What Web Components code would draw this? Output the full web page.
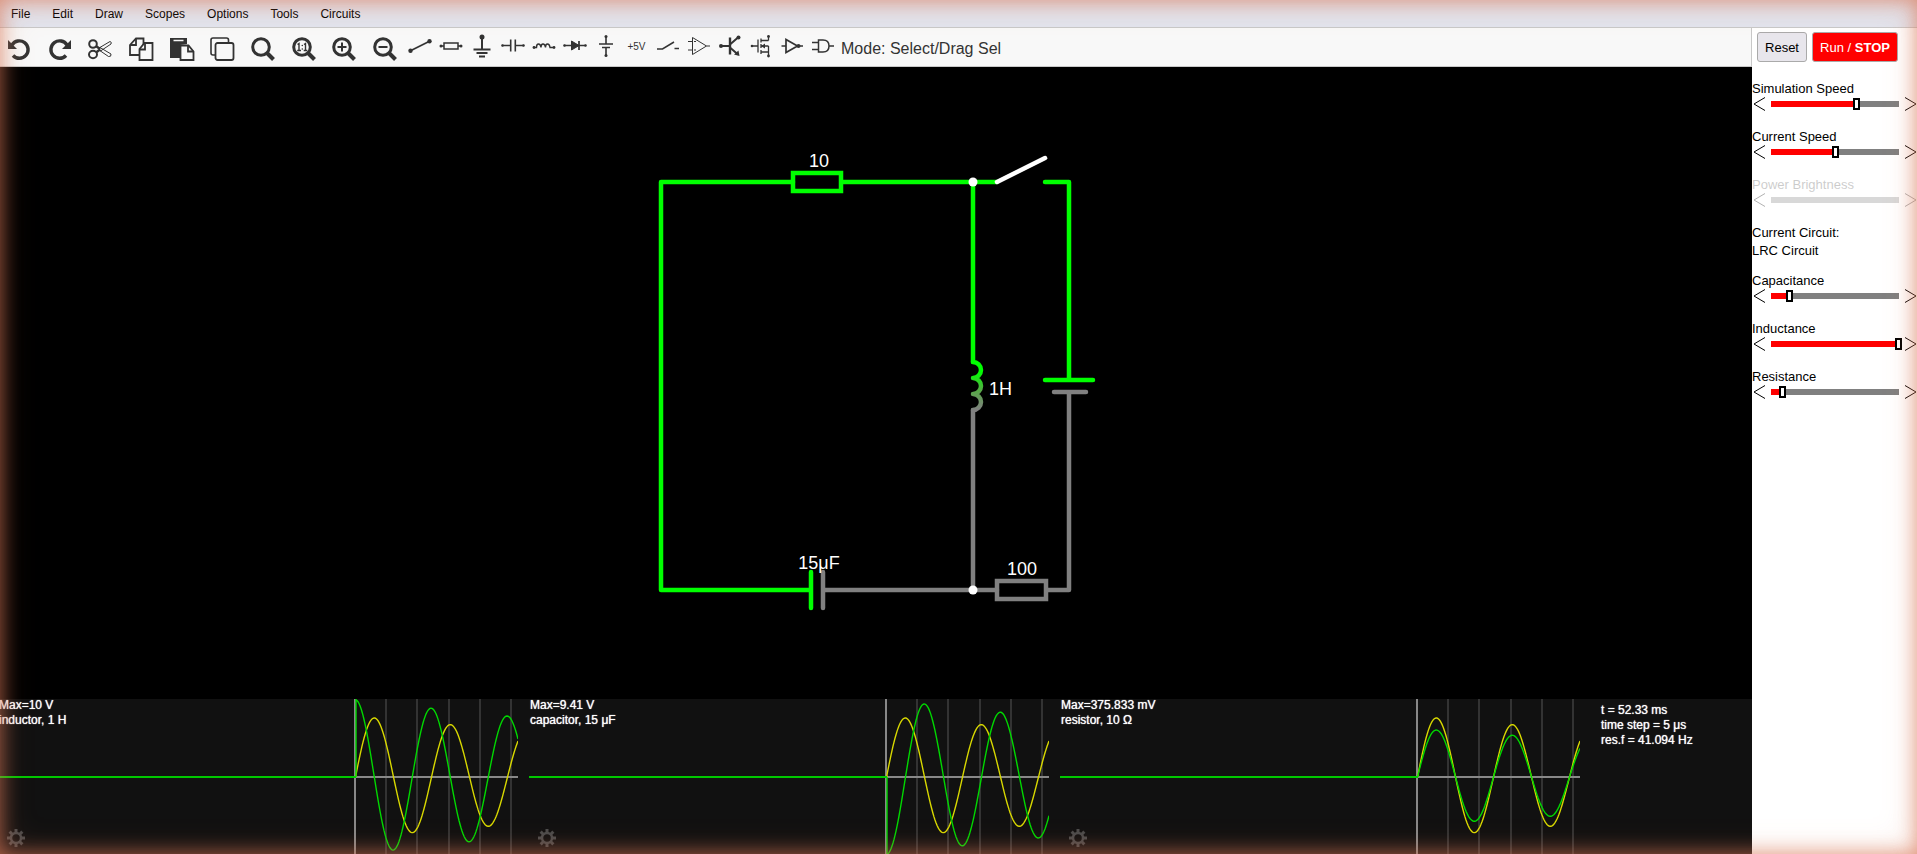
<!DOCTYPE html>
<html lang="en">
<head>
<meta charset="utf-8">
<title>Circuit Simulator</title>
<style>
html,body{margin:0;height:100%}
body{font-family:"Liberation Sans",Arial,sans-serif;background:#fff;color:#000}
</style>
</head>
<body>
<circuit-app></circuit-app>
<script>
const define = (name, css, html, setup) => customElements.define(name, class extends HTMLElement {
  constructor() {
    super();
    const t = document.createElement('template');
    t.innerHTML = `<style>*{box-sizing:border-box}button{font:inherit;color:inherit;border:0;background:none;padding:0;margin:0}svg{display:block}${css}</style>${typeof html === 'function' ? '' : html}`;
    this.attachShadow({mode: 'open'}).append(t.content.cloneNode(true));
  }
  connectedCallback() {
    if (this.ready) return;
    this.ready = true;
    if (typeof html === 'function') this.shadowRoot.innerHTML += html(this);
    if (setup) setup(this);
  }
});

/* Menu bar */
define('menu-bar', `
:host{display:block;background:#e2e4ed;border-bottom:1px solid #c8c8c8}
nav{display:flex;gap:22px;padding:0 11px;height:27px;align-items:center;font-size:12px;line-height:16px;text-shadow:0 0 1px #000,0 0 1px #000}`,
`<nav>${['File','Edit','Draw','Scopes','Options','Tools','Circuits'].map(x => `<button>${x}</button>`).join('')}</nav>`);

/* Tool bar icons, 24x24 */
const lens = '<circle cx="10" cy="10" r="8.3" fill="none" stroke-width="3"/><path d="M16 16l6.5 6.5" stroke-width="4"/>';
const dot = (x, y, r = 1.7) => `<circle cx="${x}" cy="${y}" r="${r}" fill="#333" stroke="none"/>`;
const big = {
  Undo: '<path d="M5 8A8.7 8.7 0 1 1 6 18.5" fill="none" stroke-width="3.4"/><path d="M1 3v9h9z" fill="#333" stroke="none"/>',
  Redo: '<path d="M19 8A8.7 8.7 0 1 0 18 18.5" fill="none" stroke-width="3.4"/><path d="M23 3v9h-9z" fill="#333" stroke="none"/>',
  Cut: '<g fill="none"><circle cx="5" cy="7" r="3.8" stroke-width="2"/><ellipse cx="5" cy="17.5" rx="4" ry="3.7" stroke-width="2"/><path d="M8 9l4 3M8 15.500l4-3" stroke-width="2.400"/><path d="M11 11L22 4.500q2 .5 1 2.500L12.500 14zM12 10.500L23 17q.5 3-2.500 2.500L11 13z"/></g>',
  Copy: '<g fill="#f8f8f8" stroke-width="1.800"><path d="M7 1.500h7.500V18H1V8z"/><path d="M7 1.500V8H1" fill="none"/><path d="M15.500 6H23.500v17h-13V12z"/><path d="M16 6v6.500h-5.500" fill="none"/></g>',
  Paste: '<path d="M0 1h17v6l-7 1v13H0z" fill="#333" stroke="none"/><path d="M3.500 3.500h10" stroke="#f8f8f8" stroke-width="1.500"/><g fill="#f8f8f8" stroke-width="1.800"><path d="M10.500 8.500h8l5 6V23h-13z"/><path d="M18 8.500v6h5.500" fill="none"/></g>',
  Duplicate: '<rect x="1" y="1" width="17.500" height="17" rx="2" fill="#f8f8f8" stroke-width="1.600"/><rect x="5.500" y="6" width="18" height="17" rx="2" fill="#f8f8f8" stroke-width="1.800"/>',
  Find: lens,
  'Zoom 1:1': lens + '<path d="M5.500 7.500L7 6.500v7M5.200 13.500H9M12 7.500l1.500-1v7M11.700 13.500h3.600" fill="none" stroke-width="1.400"/>' + dot(10.300,8.500,.8) + dot(10.300,12,.8),
  'Zoom in': lens + '<path d="M10 5.500v9M5.500 10h9" stroke-width="2"/>',
  'Zoom out': lens + '<path d="M5.500 10h9" stroke-width="2"/>'
};
const small = {
  Wire: '<path d="M2 17L22 7" stroke-width="1.800"/>' + dot(2.500,16.700,2.200) + dot(21.500,7.300,2.200),
  Resistor: '<path d="M1 12h4M19 12h4M5 9h14v6H5z" fill="none" stroke-width="1.500"/>' + dot(2,12,1.500) + dot(22,12,1.500),
  Ground: '<path d="M12 3v12" stroke-width="2"/><path d="M3.500 15.500h17M6.500 19h11M9 22.500h6" stroke-width="2"/>' + dot(12,3,2.500),
  Capacitor: '<path d="M1 11.500h8.500M14.500 11.500H23M9.700 5.500v12M14.300 5.500v12" stroke-width="1.600"/>' + dot(1.500,11.500,1.300) + dot(22.500,11.500,1.300),
  Inductor: '<path d="M1.500 13.500h3q0-3.500 2-3.500t2.500 3.500q0-3.500 2-3.500t2.500 3.500q0-3.500 2-3.500t2.500 3.500h3" fill="none" stroke-width="1.400"/>' + dot(2,13.500,1.400) + dot(22,13.500,1.400),
  Diode: '<path d="M1 11.500h22M16 7v9" stroke-width="1.700"/><path d="M8.500 7v9L16 11.500z" fill="#333"/>' + dot(1.500,11.500,1.300) + dot(22.500,11.500,1.300),
  Battery: '<path d="M12 2v7.500M12 14v8M5 10h14M8 13.500h8" stroke-width="1.600"/>' + dot(12,2.500,1.500) + dot(12,21.500,1.500),
  'Voltage source': '',
  Switch: '<path d="M1 15h5.500L18 8M18.500 14.500H23" fill="none" stroke-width="1.500"/>',
  'Op amp': '<path d="M5.500 3.500v17l14-8.500zM1 7.500h4.500M1 16h4.500M19.500 12H23M7 7.500h2M7 16h2" fill="none" stroke-width="1"/>',
  Transistor: '<path d="M2 12h9" stroke-width="2"/><path d="M12 3.500v17" stroke-width="2.400"/><path d="M12.500 10L20 3.500M12.500 14L20 20.500" stroke-width="2"/><path d="M21.500 22l-1-5.500-4.500 4z" fill="#333" stroke="none"/>' + dot(3,12,2) + dot(20.500,3.500,2),
  MOSFET: '<path d="M2.500 12h6M9 5.500v13M12 4.500v4M12 10v4M12 16v4M12 6.500h7.500M12 12h7.500M12 18h7.500M19.500 2v4.500M19.500 12v10" stroke-width="1.300"/><path d="M12 12l4-2.500v5z" fill="#333" stroke="none"/>' + dot(3,12,1.300) + dot(19.500,2.500,1.400) + dot(19.500,22,1.400),
  Inverter: '<path d="M1.500 12h4M6 5.500v13L17.500 12zM20 12h3" fill="none" stroke-width="1.700"/>' + dot(18.500,12,2),
  'AND gate': '<path d="M1 8.500h6.500M1 15.500h6.500M7.500 6v12h4.500q6 0 6-6t-6-6zM18 12h5" fill="none" stroke-width="1.500"/>'
};
const tool = (name, body) => `<button title="${name}" aria-label="${name}">${body
  ? `<svg width="24" height="24" viewBox="0 0 24 24" stroke="#333" stroke-width="1" overflow="visible">${body}</svg>` : '+5V'}</button>`;
const tools = set => Object.entries(set).map(([n, b]) => tool(n, b)).join('');
define('tool-bar', `
:host{display:flex;height:39px;align-items:center;background:#f8f8f8;border:solid #c8c8c8;border-width:0 1px 1px 0;color:#333;white-space:nowrap}
.edit{display:grid;grid-template-columns:repeat(10,24px);justify-content:space-between;width:390px;margin-left:7px;padding-top:3px}
.parts{display:grid;grid-template-columns:repeat(14,31px);justify-items:center;align-items:center;margin-left:7px;padding-bottom:2px;font-size:10px}
.mode{font-size:16px;line-height:20px;margin:4px 0 0 3px}`,
`<div class="edit">${tools(big)}</div><div class="parts">${tools(small)}</div><span class="mode">Mode: Select/Drag Sel</span>`);

/* Schematic */
const G = '#0f0', Y = '#808080';
define('circuit-canvas', `
:host{display:block;flex:1;min-height:0;background:#000}
svg{width:100%;height:100%}
text{font-size:18px;fill:#fff}`,
`<svg viewBox="0 67 1752 632" role="img" aria-label="LRC circuit">
<defs><linearGradient id="coil" gradientUnits="userSpaceOnUse" x1="0" y1="362" x2="0" y2="410"><stop offset="0.2" stop-color="${G}"/><stop offset="0.6" stop-color="#58a848"/><stop offset="1" stop-color="${Y}"/></linearGradient></defs>
<g fill="none" stroke-width="4.500" stroke-linecap="round" stroke-linejoin="round">
<g stroke="${Y}"><path d="M973 410V590M1086 392H1054M1069 392V590H1048M823 590H997M823 572V608"/><path d="M997 581h49v18h-49z" stroke-linejoin="miter"/></g>
<g stroke="${G}"><path d="M793 182H661V590H811M811 572V608M842 182H997M973 182V362M1045 182H1069V380M1045 380H1093"/><path d="M793 173h48v18h-48z" stroke-linejoin="miter"/></g>
<path stroke="url(#coil)" d="M973 362A8 8 0 0 1 973 378A8 8 0 0 1 973 394A8 8 0 0 1 973 410"/>
<path stroke="#fff" d="M997 182L1045 158"/></g>
<circle cx="973" cy="182" r="4.500" fill="#fff"/><circle cx="973" cy="590" r="4.500" fill="#fff"/>
<g text-anchor="middle"><text x="819" y="167">10</text><text x="819" y="569">15μF</text><text x="1022" y="575">100</text></g>
<text x="989" y="395">1H</text></svg>`);

/* Scope: damped sinusoids, sampled per pixel */
const wave = (amp, phase) => {
  let d = 'M358 78';
  for (let t = 0; t <= 162; t++)
    d += `L${358 + t} ${(78 - amp * Math.exp(-.00158 * t) * Math.sin(2 * Math.PI * t / 76 + phase)).toFixed(1)}`;
  return d;
};
let teeth = '';
for (let i = 0; i < 8; i++) teeth += `<path d="M9 0v4" transform="rotate(${i * 45} 9 9)"/>`;
define('scope-plot', `
:host{display:block;position:relative;flex:1;min-width:0;height:155px}
.plot{width:100%;height:100%}
p{position:absolute;left:1px;top:-1px;margin:0;font-size:12px;line-height:15px;white-space:pre;text-shadow:0 0 1px #fff}
button{position:absolute;left:9px;bottom:7px}`,
el => `<svg class="plot" viewBox="0 0 520 155" preserveAspectRatio="none" fill="none">
<path d="M388 0V155M419 0V155M451 0V155M482 0V155M513 0V155" stroke="#333" stroke-width="2"/>
<path d="M357 0V155M357 78H520" stroke="#888" stroke-width="2"/>
<path d="${wave(60.800, .04)}" stroke="#d8d800" stroke-width="1.400"/>
<path d="M0 78H358" stroke="#00c800" stroke-width="2"/>
<path d="${wave(+el.getAttribute('amp'), +el.getAttribute('phase'))}" stroke="#00d800" stroke-width="1.400"/></svg>
<p><slot></slot></p>
<button aria-label="Scope settings"><svg width="18" height="18" viewBox="0 0 18 18" fill="none" stroke="#4c4c4c" stroke-width="3"><circle cx="9" cy="9" r="5" stroke-width="2.500"/>${teeth}</svg></button>`);
define('scope-strip', `
:host{display:block;background:#111;color:#fff;overflow:hidden}
.row{display:flex;margin-left:-2px}
.scopes{flex:1;display:flex;gap:11px;min-width:0}
.info{width:172px;padding:4px 0 0 21px;margin:0;font-size:12px;line-height:15px;text-shadow:0 0 1px #fff}`,
`<div class="row"><div class="scopes">
<scope-plot amp="77.500" phase="1.630">Max=10 V
inductor, 1 H</scope-plot>
<scope-plot amp="77.500" phase="-1.530">Max=9.41 V
capacitor, 15 μF</scope-plot>
<scope-plot amp="48.400" phase="0.040">Max=375.833 mV
resistor, 10 Ω</scope-plot></div>
<p class="info">t = 52.33 ms<br>time step = 5 μs<br>res.f = 41.094 Hz</p></div>`);

/* Labelled slider */
define('value-slider', `
:host{display:block;height:48px}
:host([disabled]) .row{opacity:.3}
:host([disabled]) label{opacity:.2}
label{display:block;font-size:13px;line-height:17px}
.row{display:flex;gap:3px;padding-left:1px;height:14px;align-items:center}
input{-webkit-appearance:none;appearance:none;flex:1;min-width:0;height:12px;margin:0;
background:linear-gradient(90deg,transparent 3px,var(--on) 3px,var(--on) var(--v),#808080 var(--v),#808080 calc(100% - 3px),transparent calc(100% - 3px)) center/100% 6px no-repeat}
input::-webkit-slider-thumb{-webkit-appearance:none;width:7px;height:12px;border:2px solid #000;background:#fff}
:host([disabled]) input::-webkit-slider-thumb{visibility:hidden}`,
el => {
  const v = el.getAttribute('value'), arrow = d => `<svg width="12" height="14" viewBox="0 0 12 14" fill="none" stroke="#000"><path d="${d}"/></svg>`;
  return `<label for="s">${el.getAttribute('label')}</label><div class="row" style="--v:${v}%;--on:${el.hasAttribute('disabled') ? '#808080' : 'red'}">
<button aria-label="Decrease">${arrow('M12 .5L1 7L12 13.500')}</button>
<input id="s" type="range" min="0" max="100" value="${v}" ${el.hasAttribute('disabled') ? 'disabled' : ''}>
<button aria-label="Increase">${arrow('M0 .5L11 7L0 13.500')}</button></div>`;
});
define('side-panel', `
:host{display:block;width:165px;background:#fff}
.buttons{display:flex;gap:5px;padding:4px 5px 18px}
.buttons button{height:30px;font-size:13px;border:1px solid #aaa;border-radius:3px}
.reset{width:50px;background:#e8e6ec}
.run{width:86px;background:red;color:#fff}
p{margin:0;font-size:13px;line-height:18px;padding-bottom:12px}`,
`<div class="buttons"><button class="reset">Reset</button><button class="run">Run / <b>STOP</b></button></div>
<value-slider label="Simulation Speed" value="67"></value-slider>
<value-slider label="Current Speed" value="50"></value-slider>
<value-slider label="Power Brightness" value="50" disabled></value-slider>
<p>Current Circuit:<br>LRC Circuit</p>
<value-slider label="Capacitance" value="14"></value-slider>
<value-slider label="Inductance" value="100"></value-slider>
<value-slider label="Resistance" value="9"></value-slider>`);

/* Soft warm glow round the window edge */
define('edge-glow', `
:host{position:fixed;inset:0;pointer-events:none;box-shadow:inset 0 0 20px rgba(217,119,87,.75),inset 0 0 36px rgba(217,119,87,.2)}`, '');

define('circuit-app', `
:host{display:flex;flex-direction:column;min-height:100vh}
.body{flex:1;display:flex}
main{flex:1;min-width:0;display:flex;flex-direction:column}`,
`<menu-bar></menu-bar><div class="body"><main><tool-bar></tool-bar><circuit-canvas></circuit-canvas><scope-strip></scope-strip></main><side-panel></side-panel></div><edge-glow></edge-glow>`);
</script>
</body>
</html>
